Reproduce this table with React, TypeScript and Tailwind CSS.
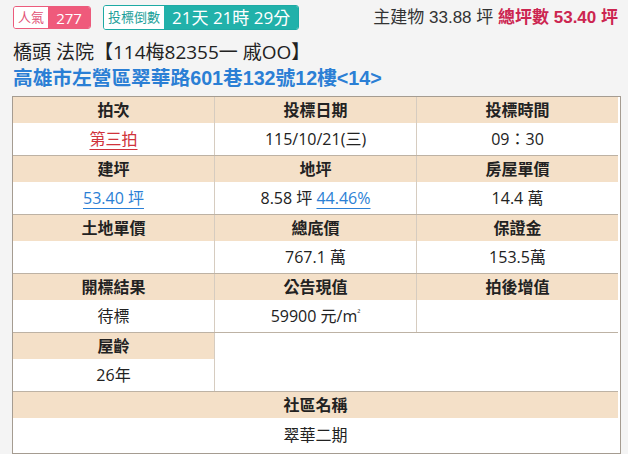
import React from "react";

const CJK = "font-['Open_Sans','Noto_Sans_CJK_TC',sans-serif]";
const ARIAL = "font-['Liberation_Sans','Noto_Sans_CJK_TC',sans-serif]";

function Head({ children }: { children?: React.ReactNode }) {
  return (
    <div className="flex h-[26px] items-center justify-center bg-[#f4e0c8] text-[16px] font-bold leading-none text-[#222]">
      {children}
    </div>
  );
}

function Value({ children, tall }: { children?: React.ReactNode; tall?: boolean }) {
  return (
    <div
      className={
        tall
          ? "flex h-[35px] items-center justify-center bg-white text-[16px] leading-none text-[#222]"
          : "flex h-[32px] items-center justify-center bg-white text-[16px] leading-none text-[#222]"
      }
    >
      {children}
    </div>
  );
}

function Cell({ label, value, last }: { label: string; value?: React.ReactNode; last?: boolean }) {
  return (
    <div className={last ? "flex flex-col" : "flex flex-col border-r border-[#d6ccc0]"}>
      <Head>{label}</Head>
      <Value>{value}</Value>
    </div>
  );
}

export default function App() {
  return (
    <div className={`h-[454px] w-[628px] overflow-hidden bg-[#f4f4f4] ${CJK}`}>
      {/* top bar */}
      <div className="flex items-center justify-between pl-[13px] pr-[10px] pt-[5px]">
        <div className="flex items-center gap-[12px]">
          <div className="flex h-[23px] overflow-hidden rounded-[3px] border border-[#ec5b7c]">
            <span className="flex items-center bg-white px-[4px] text-[13px] text-[#e25176]">人氣</span>
            <span className="flex w-[42px] items-center justify-center bg-[#ef5a7b] text-[15px] text-white">277</span>
          </div>
          <div className="flex h-[25px] overflow-hidden rounded-[3px] border border-[#1eaaa4]">
            <span className="flex items-center bg-white px-[4px] text-[13px] text-[#1c9f9a]">投標倒數</span>
            <span className="flex items-center bg-[#21b1aa] px-[8px] text-[17px] text-white">21天 21時 29分</span>
          </div>
        </div>
        <div className={`text-[17px] text-[#333] ${ARIAL}`}>
          主建物 33.88 坪 <span className="font-bold text-[#cc2550]">總坪數 53.40 坪</span>
        </div>
      </div>

      <div className="mt-[9px] pl-[13px] text-[19px] leading-[25px] text-[#222]">
        橋頭 法院【114梅82355一 戚OO】
      </div>
      <div className={`pl-[13px] text-[19.7px] font-bold leading-[26px] text-[#2b7fd5] ${ARIAL}`}>
        高雄市左營區翠華路601巷132號12樓&lt;14&gt;
      </div>

      {/* table */}
      <div className="ml-[12px] mt-[5px] w-[609px] border border-[#a59c91] bg-white pr-[2px]">
        <div className="grid grid-cols-[202px_202px_201px] border-b border-[#bdb2a4]">
          <Cell
            label="拍次"
            value={<span className="text-[#d0333b] underline decoration-[#d0333b] underline-offset-4">第三拍</span>}
          />
          <Cell label="投標日期" value="115/10/21(三)" />
          <Cell label="投標時間" value="09：30" last />
        </div>
        <div className="grid grid-cols-[202px_202px_201px] border-b border-[#bdb2a4]">
          <Cell
            label="建坪"
            value={<span className="text-[#2b7fd5] underline underline-offset-4">53.40 坪</span>}
          />
          <Cell
            label="地坪"
            value={
              <span>
                8.58 坪 <span className="text-[#2b7fd5] underline underline-offset-4">44.46%</span>
              </span>
            }
          />
          <Cell label="房屋單價" value="14.4 萬" last />
        </div>
        <div className="grid grid-cols-[202px_202px_201px] border-b border-[#bdb2a4]">
          <Cell label="土地單價" />
          <Cell label="總底價" value="767.1 萬" />
          <Cell label="保證金" value="153.5萬" last />
        </div>
        <div className="grid grid-cols-[202px_202px_201px] border-b border-[#bdb2a4]">
          <Cell label="開標結果" value="待標" />
          <Cell
            label="公告現值"
            value={
              <span>
                59900 元/m<sup className="text-[9px]">²</sup>
              </span>
            }
          />
          <Cell label="拍後增值" last />
        </div>
        <div className="grid grid-cols-[202px_403px] border-b border-[#bdb2a4]">
          <Cell label="屋齡" value="26年" />
          <div className="bg-white" />
        </div>
        <div className="flex flex-col">
          <Head>社區名稱</Head>
          <Value tall>翠華二期</Value>
        </div>
      </div>
    </div>
  );
}
